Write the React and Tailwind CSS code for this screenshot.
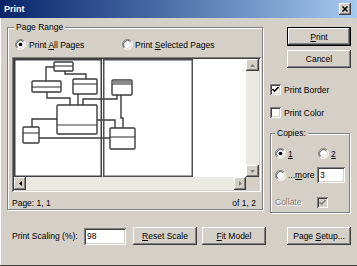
import React from "react";

const raised =
  "shadow-[inset_-1px_-1px_0_#404040,inset_1px_1px_0_#fff,inset_-2px_-2px_0_#808080,inset_2px_2px_0_#d4d0c8]";
const sunken =
  "shadow-[inset_1px_1px_0_#808080,inset_-1px_-1px_0_#fff,inset_2px_2px_0_#404040,inset_-2px_-2px_0_#d4d0c8]";
const etched = "border border-[#808080] shadow-[inset_1px_1px_0_#fff,1px_1px_0_#fff]";

function Button({ children, className = "" }) {
  return (
    <div className={`flex items-center justify-center bg-[#d4d0c8] ${raised} ${className}`}>
      {children}
    </div>
  );
}

function Radio({ checked }) {
  return (
    <svg width="11" height="11" viewBox="0 0 12 12" className="shrink-0">
      <circle cx="6" cy="6" r="5" fill="#fff" />
      <path d="M2.11 9.89A5.5 5.5 0 0 1 9.89 2.11" fill="none" stroke="#808080" />
      <path d="M9.89 2.11A5.5 5.5 0 0 1 2.11 9.89" fill="none" stroke="#fff" />
      <path d="M2.82 9.18A4.5 4.5 0 0 1 9.18 2.82" fill="none" stroke="#404040" />
      <path d="M9.18 2.82A4.5 4.5 0 0 1 2.82 9.18" fill="none" stroke="#d4d0c8" />
      {checked && <circle cx="6" cy="6" r="2" fill="#000" />}
    </svg>
  );
}

function Check({ checked, disabled }) {
  return (
    <div
      className={`w-[11px] h-[11px] shrink-0 flex items-center justify-center ${
        disabled ? "bg-[#d4d0c8]" : "bg-white"
      } ${sunken}`}
    >
      {checked && (
        <svg width="7" height="7" viewBox="0 0 7 7">
          <path
            d="M0.5 3 L2.6 5.2 L6.5 1"
            fill="none"
            stroke={disabled ? "#808080" : "#000"}
            strokeWidth="1.6"
          />
        </svg>
      )}
    </div>
  );
}

function Arrow({ dir, color = "#808080" }) {
  const vertical = dir === "up" || dir === "down";
  const pts = {
    up: "0,3 2.5,0 5,3",
    down: "0,0 2.5,3 5,0",
    left: "3,0 0,2.5 3,5",
    right: "0,0 3,2.5 0,5",
  }[dir];
  return (
    <svg
      width={vertical ? 5 : 3}
      height={vertical ? 3 : 5}
      viewBox={vertical ? "0 0 5 3" : "0 0 3 5"}
    >
      <polygon points={pts} fill={color} />
    </svg>
  );
}

function Diagram() {
  const s = "#3a3a3a";
  const box = (x, y, w, h, line, key) => (
    <g key={key}>
      <rect x={x} y={y} width={w} height={h} rx="1" fill="#fff" stroke={s} strokeWidth="1.4" />
      <line x1={x} y1={line} x2={x + w} y2={line} stroke={s} strokeWidth="1.1" />
    </g>
  );
  return (
    <svg width="232" height="118" viewBox="0 0 232 118" className="block">
      <rect width="232" height="118" fill="#fff" />
      <g fill="none" stroke={s} strokeWidth="1.4">
        <polyline points="40,8 32,8 32,22" />
        <polyline points="51,12 51,15 72,15 72,20" />
        <polyline points="33,33 33,39 56,39 56,46" />
        <polyline points="64,35 64,46" />
        <polyline points="69,46 69,40 103,40 103,36" />
        <polyline points="107,36 107,59 109,59 109,69" />
        <polyline points="83,61 101,61 101,69" />
        <polyline points="43,60 18,60 18,68" />
        <polyline points="25,79 96,79" />
      </g>
      {box(40, 3, 19, 9, 7, "a")}
      {box(18, 22, 29, 11, 28, "b")}
      {box(59, 20, 24, 15, 25, "c")}
      {box(43, 46, 40, 29, 66, "d")}
      {box(9, 68, 16, 16, 74, "e")}
      {box(98, 21, 20, 15, 25, "f")}
      <rect x="98.7" y="21.7" width="18.6" height="3.3" fill="#8a8a8a" />
      {box(96, 69, 25, 21, 78, "g")}
      <rect x="0.75" y="0.75" width="86.5" height="116.5" fill="none" stroke="#404040" strokeWidth="1.5" />
      <rect x="89.75" y="0.75" width="88.5" height="116.5" fill="none" stroke="#505050" strokeWidth="1.5" />
    </svg>
  );
}

export default function App() {
  return (
    <div className="w-[357px] h-[266px] overflow-hidden bg-[#d4d0c8] flex flex-col font-['Liberation_Sans',Arial,sans-serif] text-[8.5px] leading-[10px] text-black shadow-[inset_0_-1px_0_#404040,inset_1px_0_0_#fff]">
      <div className="h-[18px] shrink-0 flex items-center pl-[4px] pr-[6px] bg-linear-to-r from-[#0a246a] to-[#a6caf0]">
        <span className="text-white font-bold text-[9px]">Print</span>
        <Button className="ml-auto w-[12px] h-[12px]">
          <svg width="6" height="6" viewBox="0 0 6 6">
            <path d="M0.5 0.5 L5.5 5.5 M5.5 0.5 L0.5 5.5" stroke="#000" strokeWidth="1.5" />
          </svg>
        </Button>
      </div>

      <div className="flex flex-col pl-[7px] pr-[6px] pt-[9px]">
        <div className="flex gap-[7px]">
          {/* Page Range */}
          <div className={`relative w-[256px] h-[183px] ${etched} flex flex-col pl-[4px] pr-[1px] pt-[10px]`}>
            <span className="absolute left-[6px] -top-[6px] px-[2px] bg-[#d4d0c8]">Page Range</span>
            <div className="h-[13px] flex items-center">
              <div className="w-[110px] pl-[3px] flex items-center gap-[3px]">
                <Radio checked />
                <span>
                  Print <u>A</u>ll Pages
                </span>
              </div>
              <div className="flex items-center gap-[2px]">
                <Radio />
                <span>
                  Print <u>S</u>elected Pages
                </span>
              </div>
            </div>
            <div className={`mt-[6px] w-[249px] h-[135px] p-[2px] bg-white ${sunken}`}>
              <div className="flex flex-col">
                <div className="flex h-[118px]">
                  <Diagram />
                  <div className="w-[13px] flex flex-col bg-[#ebe9e4]">
                    <Button className="h-[12px]">
                      <Arrow dir="up" />
                    </Button>
                    <div className="flex-1" />
                    <Button className="h-[12px]">
                      <Arrow dir="down" />
                    </Button>
                  </div>
                </div>
                <div className="flex h-[13px]">
                  <div className="w-[232px] flex bg-[#ebe9e4]">
                    <Button className="w-[12px]">
                      <Arrow dir="left" color="#000" />
                    </Button>
                    <div className="flex-1" />
                    <Button className="w-[12px]">
                      <Arrow dir="right" />
                    </Button>
                  </div>
                  <div className="w-[13px] bg-[#d4d0c8]" />
                </div>
              </div>
            </div>
            <div className="mt-[5px] h-[11px] flex items-center justify-between pr-[5px]">
              <span>Page: 1, 1</span>
              <span>of 1, 2</span>
            </div>
          </div>

          {/* Right column */}
          <div className="w-[81px] flex flex-col">
            <Button className="self-end w-[64px] h-[19px] border border-black">
              <span>
                <u>P</u>rint
              </span>
            </Button>
            <Button className="self-end mt-[4px] w-[64px] h-[18px]">Cancel</Button>
            <div className="mt-[15px] h-[13px] flex items-center gap-[3px]">
              <Check checked />
              <span>Print Border</span>
            </div>
            <div className="mt-[10px] h-[13px] flex items-center gap-[3px]">
              <Check />
              <span>Print Color</span>
            </div>
            <div className={`relative mt-[14px] w-[80px] h-[80px] ${etched} flex flex-col pl-[4px] pt-[13px]`}>
              <span className="absolute left-[4px] -top-[6px] px-[2px] bg-[#d4d0c8]">Copies:</span>
              <div className="h-[13px] flex items-center">
                <div className="w-[43px] flex items-center gap-[2px]">
                  <Radio checked />
                  <u>1</u>
                </div>
                <div className="flex items-center gap-[2px]">
                  <Radio />
                  <u>2</u>
                </div>
              </div>
              <div className="mt-[7px] h-[16px] flex items-center">
                <Radio />
                <span className="ml-[2px] w-[29px]">
                  ...<u>m</u>ore
                </span>
                <div className={`w-[28px] h-[16px] bg-white pl-[3px] flex items-center ${sunken}`}>3</div>
              </div>
              <div className="mt-[13px] h-[12px] flex items-center">
                <span className="w-[42px] text-[#808080] [text-shadow:1px_1px_0_#fff]">Collate</span>
                <Check checked disabled />
              </div>
            </div>
          </div>
        </div>

        {/* Bottom row */}
        <div className="mt-[14px] h-[18px] flex items-center pl-[5px]">
          <span className="w-[72px]">Print Scaling (%):</span>
          <div className={`w-[42px] h-[17px] bg-white pl-[3px] flex items-center ${sunken}`}>98</div>
          <Button className="ml-[7px] w-[64px] h-[18px]">
            <span>
              <u>R</u>eset Scale
            </span>
          </Button>
          <Button className="ml-[5px] w-[64px] h-[18px]">
            <span>
              <u>F</u>it Model
            </span>
          </Button>
          <Button className="ml-auto w-[64px] h-[18px]">
            <span>
              Page <u>S</u>etup...
            </span>
          </Button>
        </div>
      </div>
    </div>
  );
}
